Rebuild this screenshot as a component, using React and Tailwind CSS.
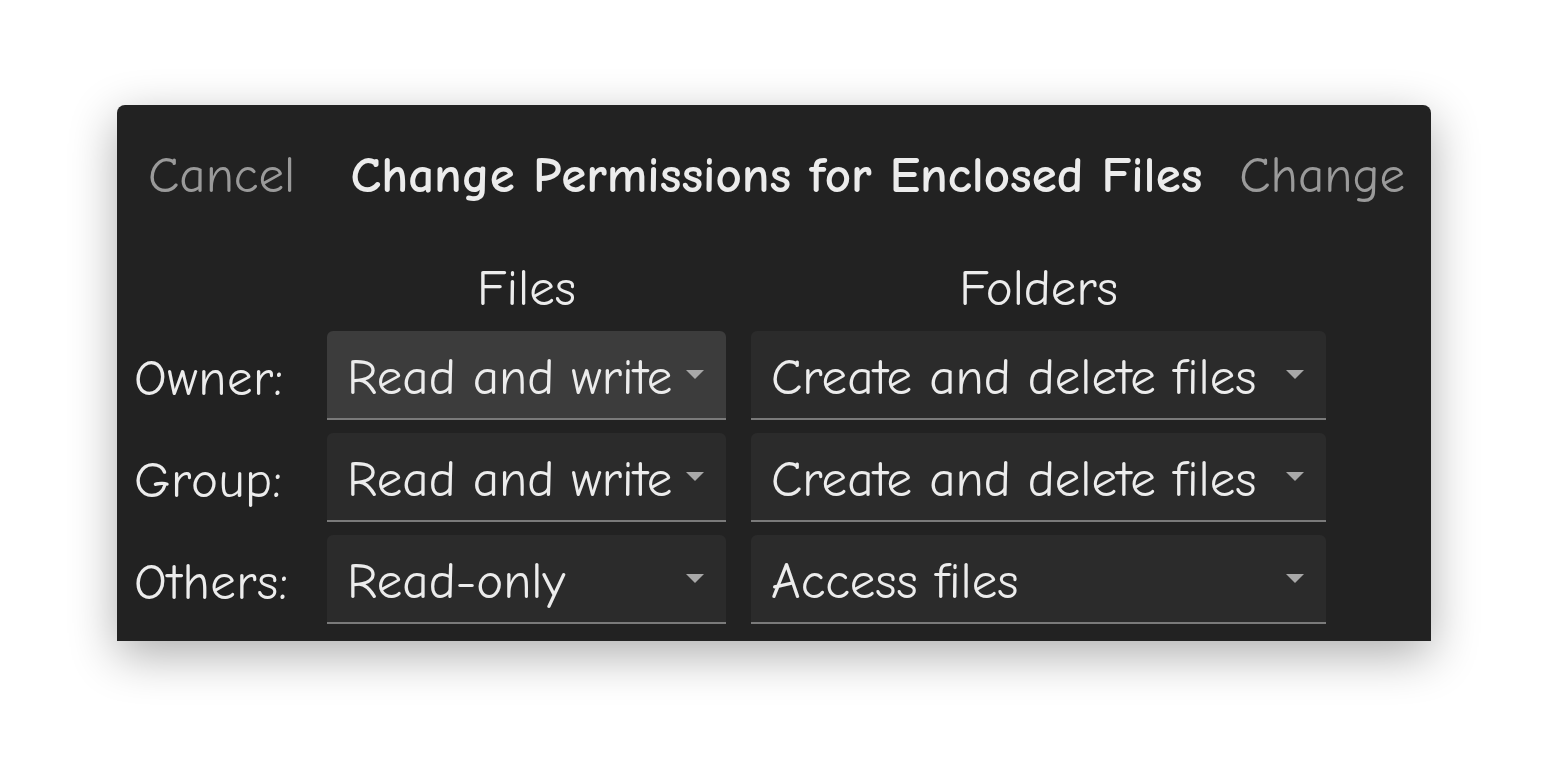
import React from 'react';

const Arrow = () => (
  <svg width="18" height="9" viewBox="0 0 18 9" className="shrink-0">
    <polygon points="0,0 18,0 9,9" fill="#a8a8a8" />
  </svg>
);

const Select = ({ value, active, width }) => (
  <div
    className={`${width} h-[89px] flex items-center justify-between pl-[20px] pr-[22px] rounded-t-[6px] border-b-2 border-[#7a7a7a] ${
      active ? 'bg-[#3c3c3c]' : 'bg-[#2b2b2b]'
    }`}
  >
    <span className="text-[#ececec] whitespace-nowrap pt-[6px]">{value}</span>
    <Arrow />
  </div>
);

const rows = [
  { label: 'Owner:', files: 'Read and write', folders: 'Create and delete files', active: true },
  { label: 'Group:', files: 'Read and write', folders: 'Create and delete files' },
  { label: 'Others:', files: 'Read-only', folders: 'Access files' },
];

export default function App() {
  return (
    <div
      className="w-[1552px] h-[774px] bg-white pt-[105px] pl-[117px]"
      style={{ fontFamily: '"Comic Sans MS", "Comic Neue", "Noto Sans", sans-serif' }}
    >
      <div className="w-[1314px] h-[536px] bg-[#222222] rounded-t-[8px] shadow-[0_14px_48px_rgba(0,0,0,0.32)] text-[51px] leading-none">
        <div className="h-[140px] grid grid-cols-[1fr_auto_1fr] items-center pl-[31px] pr-[26px]">
          <span className="text-[#9a9a9a]">Cancel</span>
          <span className="text-[#ececec] font-bold">Change Permissions for Enclosed Files</span>
          <span className="text-[#9a9a9a] justify-self-end">Change</span>
        </div>
        <div className="pl-[17px]">
          <div className="h-[86px] grid grid-cols-[168px_399px_575px] gap-x-[25px] items-center text-[#ececec]">
            <span />
            <span className="text-center">Files</span>
            <span className="text-center">Folders</span>
          </div>
          <div className="flex flex-col gap-[13px]">
            {rows.map(r => (
              <div key={r.label} className="grid grid-cols-[168px_399px_575px] gap-x-[25px] items-center">
                <span className="text-[#ececec] pt-[6px] tracking-[0.5px]">{r.label}</span>
                <Select value={r.files} active={r.active} width="w-[399px]" />
                <Select value={r.folders} width="w-[575px]" />
              </div>
            ))}
          </div>
        </div>
      </div>
    </div>
  );
}
